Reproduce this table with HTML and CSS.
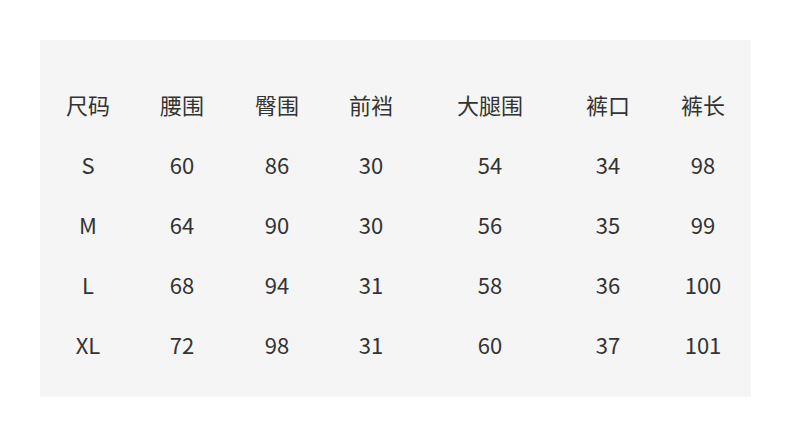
FILE: index.html
```html
<!DOCTYPE html>
<html lang="zh">
<head>
<meta charset="utf-8">
<link rel="stylesheet" href="styles.css">
</head>
<body>
<div class="card">
  <div class="table">
    <div>尺码</div><div>腰围</div><div>臀围</div><div>前裆</div><div>大腿围</div><div>裤口</div><div>裤长</div>
    <div>S</div><div>60</div><div>86</div><div>30</div><div>54</div><div>34</div><div>98</div>
    <div>M</div><div>64</div><div>90</div><div>30</div><div>56</div><div>35</div><div>99</div>
    <div>L</div><div>68</div><div>94</div><div>31</div><div>58</div><div>36</div><div>100</div>
    <div>XL</div><div>72</div><div>98</div><div>31</div><div>60</div><div>37</div><div>101</div>
  </div>
</div>
</body>
</html>
```
FILE: styles.css
```css
html, body {
  margin: 0;
  padding: 0;
  background: #ffffff;
}
body {
  padding: 40px 0 0 40px;
  font-family: "Noto Sans CJK SC", "Noto Sans", sans-serif;
  color: #333333;
}
.card {
  width: 711px;
  height: 357px;
  box-sizing: border-box;
  background: #f5f5f5;
  padding: 34px 0 0 0;
  overflow: hidden;
}
.table {
  display: grid;
  grid-template-columns: 96px 92px 98px 90px 148px 88px 102px;
  grid-auto-rows: 60px;
  font-size: 22px;
}
.table > div {
  display: flex;
  align-items: center;
  justify-content: center;
  white-space: nowrap;
}
```
